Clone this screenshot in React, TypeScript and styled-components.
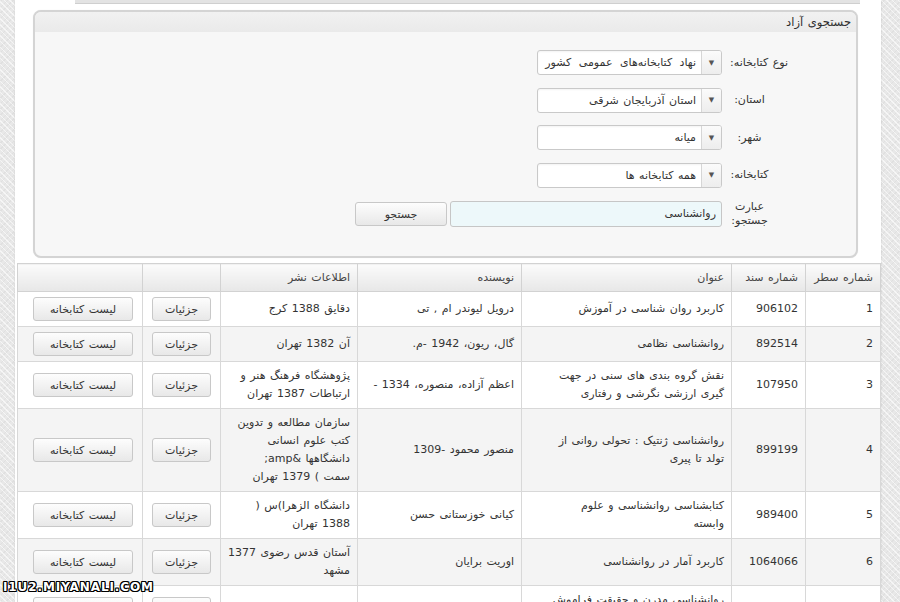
import React from "react";
import styled, { createGlobalStyle } from "styled-components";

const GlobalStyle = createGlobalStyle`
  html, body {
    margin: 0;
    padding: 0;
    overflow: hidden;
  }
  body {
    background-color: #e8e8e8;
    background-image:
      repeating-linear-gradient(45deg, rgba(255, 255, 255, 0.6) 0 1px, transparent 1px 4px),
      repeating-linear-gradient(-45deg, rgba(0, 0, 0, 0.035) 0 1px, transparent 1px 4px);
    font-family: "DejaVu Sans", Tahoma, sans-serif;
    font-size: 11px;
    word-spacing: 1px;
    color: #333;
  }
`;

const Root = styled.div`
  position: relative;
  height: 602px;
  overflow: hidden;
`;

const Page = styled.div`
  width: 866px;
  height: 602px;
  margin-left: 15px;
  background: #fff;
  box-shadow: 0 0 2px rgba(0, 0, 0, 0.12);
  overflow: hidden;
`;

const TopStrip = styled.div`
  width: 785px;
  height: 3px;
  margin-left: 60px;
  background: #e3e3e3;
  border-bottom: 1px solid #cfcfcf;
`;

const SearchBox = styled.div`
  box-sizing: border-box;
  width: 825px;
  height: 248px;
  margin: 6px 0 0 18px;
  border: 2px solid #d4d4d4;
  border-radius: 8px;
  background: #f7f7f7;
  box-shadow: 0 0 1px rgba(0, 0, 0, 0.1);
  direction: rtl;
  overflow: hidden;
`;

const Legend = styled.div`
  height: 20px;
  line-height: 20px;
  padding-right: 5px;
  background: linear-gradient(#f1f1f1, #eaeaea);
  color: #2e2e2e;
  font-size: 11.5px;
`;

const FormGrid = styled.div`
  display: grid;
  grid-template-columns: 45px max-content;
  column-gap: 5px;
  row-gap: 12.5px;
  align-items: center;
  padding: 18px 84px 0 0;
`;

const Label = styled.div<{ $wide?: boolean }>`
  text-align: center;
  line-height: 14px;
  color: #333;
  white-space: ${(p) => (p.$wide ? "nowrap" : "normal")};
  margin-right: ${(p) => (p.$wide ? "-19px" : "0")};
`;

const Select = styled.div`
  box-sizing: border-box;
  display: flex;
  align-items: center;
  width: 185px;
  height: 25px;
  border: 1px solid #c9c9c9;
  border-radius: 3px;
  background: #fff;
  box-shadow: inset 0 1px 2px rgba(0, 0, 0, 0.05);
  overflow: hidden;
`;

const Arrow = styled.span`
  flex: none;
  align-self: stretch;
  width: 19px;
  display: flex;
  align-items: center;
  justify-content: center;
  background: linear-gradient(#fbfbfb, #ededed);
  border-left: 1px solid #d6d6d6;
  color: #555;
  font-size: 7px;
`;

const Value = styled.span<{ $spread?: boolean }>`
  flex: 1;
  padding: 0 5px;
  white-space: nowrap;
  text-align: right;
  word-spacing: ${(p) => (p.$spread ? "4px" : "1px")};
`;

const SearchControls = styled.div`
  display: flex;
  align-items: center;
  gap: 3px;
`;

const Input = styled.div`
  box-sizing: border-box;
  width: 272px;
  height: 26px;
  line-height: 24px;
  padding: 0 5px;
  border: 1px solid #c6c6c6;
  border-radius: 3px;
  background: #edf8fa;
  text-align: right;
`;

const Button = styled.button<{ $w: number }>`
  box-sizing: border-box;
  width: ${(p) => p.$w}px;
  height: 24px;
  padding: 0;
  border: 1px solid #c8c8c8;
  border-radius: 3px;
  background: linear-gradient(#fdfdfd, #e8e8e8);
  color: #333;
  font-family: inherit;
  font-size: 11px;
  word-spacing: 1px;
  cursor: pointer;
`;

const Table = styled.table`
  width: 863px;
  margin: 5px 0 0 2px;
  border-collapse: collapse;
  table-layout: fixed;
  direction: rtl;

  tbody tr:nth-child(even) td {
    background: #f4f4f4;
  }
`;

const Col = styled.col<{ $w: number }>`
  width: ${(p) => p.$w}px;
`;

const Th = styled.th`
  height: 27px;
  padding: 0 7px;
  border: 1px solid #d2d2d2;
  background: linear-gradient(#fbfbfb, #e7e7e7);
  color: #444;
  font-weight: normal;
  text-align: right;
  white-space: nowrap;
`;

const Td = styled.td`
  padding: 5px 7px;
  border: 1px solid #d8d8d8;
  background: #fff;
  line-height: 18px;
  text-align: right;
  vertical-align: middle;
  white-space: pre-line;
`;

const ButtonTd = styled(Td)`
  padding: 5px 9px;
`;

const Watermark = styled.div`
  position: absolute;
  left: 3px;
  top: 580px;
  direction: ltr;
  font-family: "DejaVu Sans", sans-serif;
  font-weight: bold;
  font-size: 12px;
  letter-spacing: 0.9px;
  color: #fff;
  text-shadow: -1px -1px 0 #000, 1px -1px 0 #000, -1px 1px 0 #000, 1px 1px 0 #000,
    0 1px 0 #000, 0 -1px 0 #000, 1px 0 0 #000, -1px 0 0 #000;
`;

type Row = { n: number; doc: string; title: string; author: string; pub: string };

const rows: Row[] = [
  { n: 1, doc: "906102", title: "کاربرد روان شناسی در آموزش", author: "درویل لیوندر ام , تی", pub: "دقایق 1388 کرج" },
  { n: 2, doc: "892514", title: "روانشناسی نظامی", author: "گال، ریون، 1942 -م.", pub: "آن 1382 تهران" },
  {
    n: 3,
    doc: "107950",
    title: "نقش گروه بندی های سنی در جهت\nگیری ارزشی نگرشی و رفتاری",
    author: "اعظم آزاده، منصوره، 1334 -",
    pub: "پژوهشگاه فرهنگ هنر و\nارتباطات 1387 تهران",
  },
  {
    n: 4,
    doc: "899199",
    title: "روانشناسی ژنتیک : تحولی روانی از\nتولد تا پیری",
    author: "منصور محمود -1309",
    pub: "سازمان مطالعه و تدوین\nکتب علوم انسانی\nدانشگاهها &amp;\nسمت ) 1379 تهران",
  },
  {
    n: 5,
    doc: "989400",
    title: "کتابشناسی روانشناسی و علوم\nوابسته",
    author: "کیانی خوزستانی حسن",
    pub: "دانشگاه الزهرا)س (\n1388 تهران",
  },
  {
    n: 6,
    doc: "1064066",
    title: "کاربرد آمار در روانشناسی",
    author: "اوریت برایان",
    pub: "آستان قدس رضوی 1377\nمشهد",
  },
  {
    n: 7,
    doc: "1058817",
    title: "روانشناسی مدرن و حقیقت فراموش\nشده",
    author: "",
    pub: "",
  },
];

const selects = [
  { label: "نوع کتابخانه:", value: "نهاد کتابخانه‌های عمومی کشور", wide: true },
  { label: "استان:", value: "استان آذربایجان شرقی" },
  { label: "شهر:", value: "میانه" },
  { label: "کتابخانه:", value: "همه کتابخانه ها" },
];

export default function App() {
  return (
    <Root>
      <GlobalStyle />
      <Page>
        <TopStrip />
        <SearchBox>
          <Legend>جستجوی آزاد</Legend>
          <FormGrid>
            {selects.map((s) => (
              <React.Fragment key={s.label}>
                <Label $wide={s.wide}>{s.label}</Label>
                <Select>
                  <Arrow>▼</Arrow>
                  <Value $spread={s.wide}>{s.value}</Value>
                </Select>
              </React.Fragment>
            ))}
            <Label>عبارت جستجو:</Label>
            <SearchControls>
              <Input>روانشناسی</Input>
              <Button $w={92}>جستجو</Button>
            </SearchControls>
          </FormGrid>
        </SearchBox>

        <Table>
          <colgroup>
            <Col $w={75} />
            <Col $w={74} />
            <Col $w={210} />
            <Col $w={164} />
            <Col $w={137} />
            <Col $w={78} />
            <Col $w={125} />
          </colgroup>
          <thead>
            <tr>
              <Th>شماره سطر</Th>
              <Th>شماره سند</Th>
              <Th>عنوان</Th>
              <Th>نویسنده</Th>
              <Th>اطلاعات نشر</Th>
              <Th></Th>
              <Th></Th>
            </tr>
          </thead>
          <tbody>
            {rows.map((r) => (
              <tr key={r.n}>
                <Td>{r.n}</Td>
                <Td>{r.doc}</Td>
                <Td>{r.title}</Td>
                <Td>{r.author}</Td>
                <Td>{r.pub}</Td>
                <ButtonTd>
                  <Button $w={59}>جزئیات</Button>
                </ButtonTd>
                <ButtonTd>
                  <Button $w={100}>لیست کتابخانه</Button>
                </ButtonTd>
              </tr>
            ))}
          </tbody>
        </Table>
      </Page>
      <Watermark>I1U2.MIYANALI.COM</Watermark>
    </Root>
  );
}
